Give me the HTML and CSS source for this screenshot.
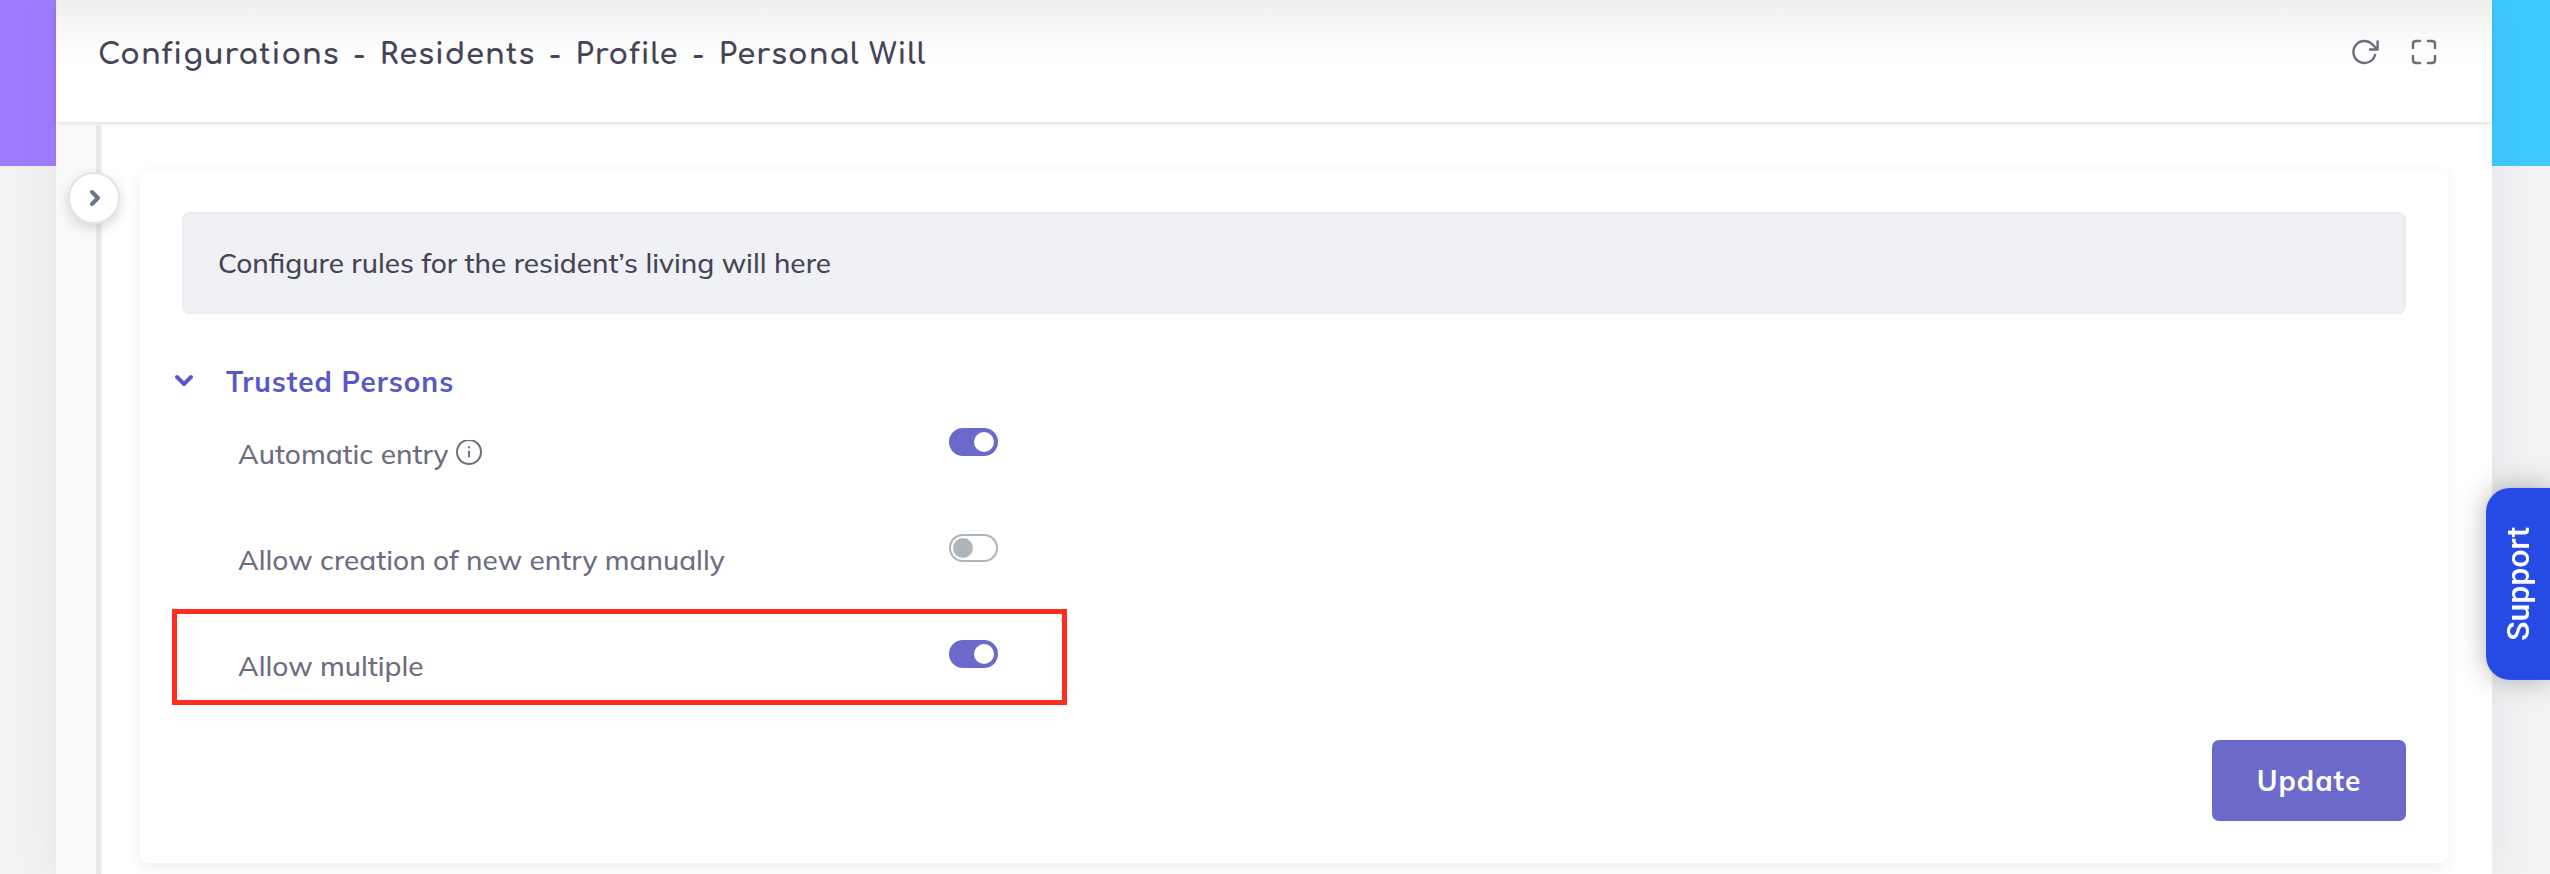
FILE: index.html
```html
<!DOCTYPE html>
<html lang="en">
<head>
    <meta charset="UTF-8">
    <title>Personal Will</title>
    <link rel="stylesheet" href="styles.css">
</head>
<body>
    <div class="page">
        <header class="header">
            <h1>
                <span>Configurations</span>
                <span>-</span>
                <span>Residents</span>
                <span>-</span>
                <span>Profile</span>
                <span>-</span>
                <span>Personal Will</span>
            </h1>
            <div class="tools">
                <button class="tool" aria-label="Refresh">
                    <svg width="28" height="28" viewBox="0 0 28 28">
                        <path d="M24 17A11 11 0 1 1 21 6L26 11M26.6 3.5v8H19"/>
                    </svg>
                </button>
                <button class="tool" aria-label="Full screen">
                    <svg width="28" height="28" viewBox="0 0 28 28">
                        <path d="M3 10V6q0-3 3-3h4M18 3h4q3 0 3 3v4M25 18v4q0 3-3 3h-4M10 25H6q-3 0-3-3v-4"/>
                    </svg>
                </button>
            </div>
        </header>

        <div class="content">
            <aside class="sidebar">
                <button class="expand" aria-label="Open menu">
                    <svg width="16" height="20" viewBox="0 0 16 20"><path d="M6 4l6 6-6 6"/></svg>
                </button>
            </aside>

            <main class="card">
                <div class="notice">Configure rules for the resident’s living will here</div>

                <section>
                    <h2>
                        <button class="section-toggle" aria-expanded="true">
                            <svg width="20" height="16" viewBox="0 0 20 16"><path d="M3 3l7 7 7-7"/></svg>
                            Trusted Persons
                        </button>
                    </h2>
                    <div class="row">
                        <label for="autoEntry">
                            Automatic entry
                            <svg class="info" width="28" height="28" viewBox="0 0 28 28">
                                <circle cx="14" cy="12" r="12"/>
                                <path d="M14 11.5v5M14 7v.4"/>
                            </svg>
                        </label>
                        <input type="checkbox" id="autoEntry" checked>
                    </div>
                    <div class="row">
                        <label for="manualEntry">Allow creation of new entry manually</label>
                        <input type="checkbox" id="manualEntry">
                    </div>
                    <div class="row marked">
                        <label for="multiple">Allow multiple</label>
                        <input type="checkbox" id="multiple" checked>
                    </div>
                </section>

                <div class="actions">
                    <button class="update">Update</button>
                </div>
            </main>
        </div>
    </div>

    <button class="support">Support</button>
</body>
</html>
```
FILE: styles.css
```css
*,
*::before,
*::after {
    box-sizing: border-box;
}
body {
    margin: 0;
    padding: 0 58px 0 56px;
    font-family: Muli, Mulish, Lato, sans-serif;
    font-size: 28px;
    font-weight: 500;
    line-height: 42px;
    color: #464457;
    background: linear-gradient(90deg, #9f7cff, #9f7cff 56px, #3fcbff calc(100% - 58px)) 0 0 / 100% 166px no-repeat #f2f2f4;
}
button {
    font: inherit;
    border: none;
    padding: 0;
    background: none;
    cursor: pointer;
}
svg {
    display: block;
    fill: none;
    stroke: currentColor;
    stroke-width: 2;
    stroke-linecap: round;
    stroke-linejoin: round;
}
.page {
    display: flex;
    flex-direction: column;
    min-height: 100vh;
    background: #fff;
    box-shadow: 0 0 42px rgba(82, 63, 105, 0.08);
}

/* header */
.header {
    display: flex;
    align-items: center;
    justify-content: space-between;
    height: 122px;
    padding: 0 54px 18px 42px;
    background: linear-gradient(#eee, #fdfdfd 50px, #fff 72px);
    box-shadow: 0 2px 4px rgba(0, 0, 0, 0.12);
}
h1 {
    display: flex;
    gap: 14px;
    margin: 0;
    padding-top: 6px;
    font-family: Comfortaa, Quicksand, Lato, sans-serif;
    font-size: 29px;
    font-weight: 700;
    letter-spacing: 1px;
}
.tools {
    display: flex;
    gap: 31px;
}
.tool {
    color: #6c6e80;
}
.tool svg {
    stroke-width: 2.4;
}

/* collapsed sidebar */
.content {
    display: flex;
    flex: 1;
    padding-top: 4px;
}
.sidebar {
    position: relative;
    flex: 0 0 45px;
    margin-right: 39px;
    background: #f9f9f9;
    border-right: 5px solid #e8e8e8;
    box-shadow: 1px 0 3px rgba(0, 0, 0, 0.06);
}
.expand {
    position: absolute;
    top: 46px;
    left: 12px;
    display: flex;
    align-items: center;
    justify-content: center;
    width: 52px;
    height: 52px;
    color: #68758c;
    background: #fff;
    border: 2px solid #e4e5eb;
    border-radius: 50%;
    box-shadow: 0 4px 12px rgba(60, 70, 100, 0.2);
}
.expand svg,
.section-toggle svg {
    stroke-width: 4;
}

/* card */
.card {
    flex: 1;
    align-self: flex-start;
    margin: 44px 44px 11px 0;
    padding: 42px;
    background: #fff;
    border-radius: 8px;
    box-shadow: 0 4px 14px rgba(0, 0, 0, 0.07);
}
.notice {
    padding: 28px 34px;
    background: #f0f1f4;
    border: 2px solid #ebecee;
    border-radius: 8px;
}
h2 {
    margin: 47px 0 0;
    font-size: 28px;
}
.section-toggle {
    display: flex;
    align-items: center;
    gap: 32px;
    margin-left: -8px;
    font-weight: 700;
    letter-spacing: 1px;
    color: #5a57c7;
}
.row {
    position: relative;
    display: flex;
    align-items: flex-start;
    height: 106px;
    padding: 25px 0 0 56px;
}
.row label {
    display: flex;
    align-items: center;
    gap: 6px;
    width: 711px;
    padding-top: 5px;
    color: #6c6e80;
}
/* frame round the marked setting */
.marked::after {
    content: "";
    position: absolute;
    top: -6px;
    left: -10px;
    width: 895px;
    height: 96px;
    border: 5px solid #ff2d20;
    pointer-events: none;
}
input[type="checkbox"] {
    appearance: none;
    flex: none;
    width: 49px;
    height: 28px;
    margin: 0;
    padding: 2px;
    border: 2px solid #adb5bd;
    border-radius: 14px;
    background: #fff;
}
input[type="checkbox"]::before {
    content: "";
    display: block;
    width: 20px;
    height: 20px;
    border-radius: 50%;
    background: #adb5bd;
}
input[type="checkbox"]:checked {
    border-color: #6b69c9;
    background: #6b69c9;
}
input[type="checkbox"]:checked::before {
    margin-left: auto;
    background: #fff;
}
.actions {
    display: flex;
    justify-content: flex-end;
    margin-top: 19px;
}
.update {
    width: 194px;
    height: 81px;
    font-weight: 700;
    letter-spacing: 1px;
    color: #fff;
    background: #6b69c9;
    border-radius: 7px;
}

/* support tab on the window edge */
.support {
    position: fixed;
    top: 488px;
    right: 0;
    width: 64px;
    height: 192px;
    font-family: Roboto, sans-serif;
    font-size: 32px;
    color: #fff;
    background: #264be5;
    border-radius: 0 24px 24px 0;
    box-shadow: 0 0 28px rgba(0, 0, 0, 0.3);
    writing-mode: vertical-rl;
    transform: rotate(180deg);
}
```
